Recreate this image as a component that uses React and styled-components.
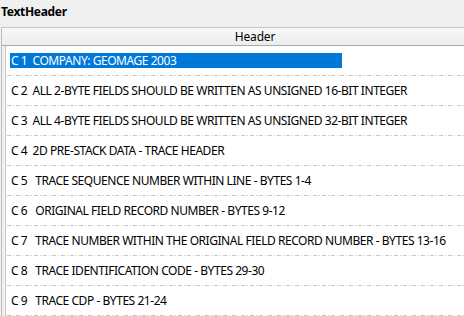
import React from "react";
import styled, { createGlobalStyle } from "styled-components";

const Global = createGlobalStyle`
  html, body { margin: 0; padding: 0; background: #f0f0f0; overflow: hidden; }
  body { font-family: "Noto Sans", "Open Sans", sans-serif; color: #000; }
`;

const Page = styled.div`
  width: 464px;
  height: 316px;
  overflow: hidden;
  display: flex;
  flex-direction: column;
`;

const Title = styled.div`
  height: 28px;
  padding: 4px 0 0 1px;
  box-sizing: border-box;
  font-size: 12px;
  font-weight: 700;
  line-height: 16px;
  letter-spacing: -0.3px;
`;

const Grid = styled.div`
  flex: 1;
  margin-left: 1px;
  border-left: 1px solid #bdbdbd;
  border-top: 1px solid #c4c4c4;
  background: #fff;
  display: flex;
  flex-direction: column;
  width: 506px;
`;

const HeaderRow = styled.div`
  height: 18px;
  box-sizing: border-box;
  border-bottom: 1px solid #a9a9a9;
  background: linear-gradient(#f9f9f9, #ececec);
  display: flex;
  align-items: center;
  justify-content: center;
  font-size: 12px;
  line-height: 16px;
  letter-spacing: -0.2px;
`;

const Body = styled.div`
  display: flex;
  flex: 1;
`;

const Gutter = styled.div`
  width: 3px;
  background: #f0f0f0;
  border-right: 1px solid #c8c8c8;
`;

const Rows = styled.div`
  flex: 1;
  display: flex;
  flex-direction: column;
`;

const Row = styled.div`
  height: 30px;
  flex: none;
  box-sizing: border-box;
  display: flex;
  align-items: center;
  padding: 0 0 2px 4px;
  font-size: 12px;
  letter-spacing: -0.45px;
  white-space: pre;
  background-image: repeating-linear-gradient(
    to right,
    #c6c6c6 0 4px,
    transparent 4px 6px,
    #c6c6c6 6px 7px,
    transparent 7px 9px
  );
  background-size: 100% 1px;
  background-repeat: no-repeat;
  background-position: 1px bottom;
`;

const Cell = styled.span`
  display: inline-block;
  line-height: 15px;
  padding-left: 1px;
  ${(p) =>
    p.$selected &&
    `
    background: #0078d7;
    color: #fff;
    width: 331px;
  `}
`;

const lines = [
  "C 1  COMPANY: GEOMAGE 2003",
  "C 2  ALL 2-BYTE FIELDS SHOULD BE WRITTEN AS UNSIGNED 16-BIT INTEGER",
  "C 3  ALL 4-BYTE FIELDS SHOULD BE WRITTEN AS UNSIGNED 32-BIT INTEGER",
  "C 4  2D PRE-STACK DATA - TRACE HEADER",
  "C 5   TRACE SEQUENCE NUMBER WITHIN LINE - BYTES 1-4",
  "C 6   ORIGINAL FIELD RECORD NUMBER - BYTES 9-12",
  "C 7   TRACE NUMBER WITHIN THE ORIGINAL FIELD RECORD NUMBER - BYTES 13-16",
  "C 8   TRACE IDENTIFICATION CODE - BYTES 29-30",
  "C 9   TRACE CDP - BYTES 21-24",
];

export default function App() {
  return (
    <Page>
      <Global />
      <Title>TextHeader</Title>
      <Grid>
        <HeaderRow>Header</HeaderRow>
        <Body>
          <Gutter />
          <Rows>
            {lines.map((l, i) => (
              <Row key={i}>
                <Cell $selected={i === 0}>{l}</Cell>
              </Row>
            ))}
          </Rows>
        </Body>
      </Grid>
    </Page>
  );
}
